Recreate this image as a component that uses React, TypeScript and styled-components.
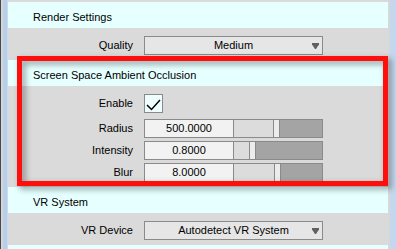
import styled, { createGlobalStyle } from 'styled-components';

const GlobalStyle = createGlobalStyle`
  html, body {
    margin: 0;
    padding: 0;
    background: #dadada;
  }
  body {
    font-family: "Liberation Sans", Arial, sans-serif;
    font-size: 11px;
    color: #000;
  }
`;

const Window = styled.div`
  position: relative;
  width: 396px;
  height: 249px;
  overflow: hidden;
  display: flex;
  background: #dadada;
`;

const LeftEdge = styled.div`
  flex: none;
  width: 8px;
  background: linear-gradient(
    to right,
    #4a4a4a 0 1px,
    #d6d6d6 1px 3px,
    #b7cfe9 3px 7px,
    #c9dbef 7px 8px
  );
`;

const RightEdge = styled.div`
  flex: none;
  width: 8px;
  background: linear-gradient(to right, #d8d8d8 0 2px, #c3d7ee 2px 8px);
`;

const Panel = styled.div`
  flex: 1;
  display: flex;
  flex-direction: column;
  padding-top: 2px;
`;

const SectionHeader = styled.div`
  flex: none;
  box-sizing: border-box;
  height: 26px;
  padding: 9px 0 0 25px;
  line-height: 13px;
  background: #e6ffff;
`;

const SectionBody = styled.div`
  flex: none;
  display: flex;
  flex-direction: column;
  gap: 3px;
  padding: 8px 0 5px;
`;

const Row = styled.div<{ $spaceAfter?: number }>`
  display: grid;
  grid-template-columns: 136px 179px;
  align-items: center;
  line-height: 13px;
  margin-bottom: ${(p) => p.$spaceAfter ?? 0}px;
`;

const Label = styled.span`
  justify-self: end;
  padding-right: 11px;
`;

const Dropdown = styled.div`
  box-sizing: border-box;
  height: 19px;
  display: grid;
  grid-template-columns: 1fr auto 1fr;
  align-items: center;
  border: 1px solid #8a8a8a;
  background: #e6e6e6;
`;

const DropdownText = styled.span`
  grid-column: 2;
  white-space: nowrap;
`;

const Arrow = styled.svg`
  grid-column: 3;
  justify-self: end;
  margin-right: 3px;
  display: block;
`;

const CheckBox = styled.div`
  box-sizing: border-box;
  width: 19px;
  height: 19px;
  border: 1px solid #8a8a8a;
  background: #eefefe;
`;

const SliderField = styled.div`
  box-sizing: border-box;
  height: 19px;
  display: flex;
  border: 1px solid #8a8a8a;
`;

const ValueBox = styled.div`
  flex: none;
  width: 88px;
  border-right: 1px solid #8a8a8a;
  background: #f2f2f2;
  text-align: center;
  line-height: 17px;
`;

const Track = styled.div`
  flex: 1;
  display: flex;
  background: #a4a4a4;
`;

const TrackFill = styled.div`
  flex: none;
  background: #dcdcdc;
`;

const Thumb = styled.div`
  flex: none;
  width: 5px;
  border-left: 1px solid #8a8a8a;
  border-right: 1px solid #8a8a8a;
  background: #ececec;
`;

const Highlight = styled.div`
  position: absolute;
  left: 17px;
  top: 56px;
  width: 371px;
  height: 130px;
  box-sizing: border-box;
  border: 5px solid #ff0e0e;
  filter: drop-shadow(3px 3px 3px rgba(0, 0, 0, 0.4));
  pointer-events: none;
  z-index: 1;
`;

const DownArrow = () => (
  <Arrow width="7" height="6" viewBox="0 0 7 6">
    <polygon points="0,0 7,0 7,1.5 4,6 3,6 0,1.5" fill="#606060" />
  </Arrow>
);

const Select = ({ value }: { value: string }) => (
  <Dropdown>
    <DropdownText>{value}</DropdownText>
    <DownArrow />
  </Dropdown>
);

const sliders = [
  { label: 'Radius', value: '500.0000', fill: 39 },
  { label: 'Intensity', value: '0.8000', fill: 15 },
  { label: 'Blur', value: '8.0000', fill: 40 },
];

const App = () => {
  return (
    <>
      <GlobalStyle />
      <Window>
        <LeftEdge />
        <Panel>
          <SectionHeader>Render Settings</SectionHeader>
          <SectionBody>
            <Row>
              <Label>Quality</Label>
              <Select value="Medium" />
            </Row>
          </SectionBody>

          <SectionHeader>Screen Space Ambient Occlusion</SectionHeader>
          <SectionBody>
            <Row $spaceAfter={3}>
              <Label>Enable</Label>
              <CheckBox>
                <svg width="17" height="17" viewBox="0 0 17 17">
                  <polyline
                    points="2,10 6.5,14.5 15,5"
                    fill="none"
                    stroke="#000"
                    strokeWidth="1.5"
                  />
                </svg>
              </CheckBox>
            </Row>
            {sliders.map((s) => (
              <Row key={s.label}>
                <Label>{s.label}</Label>
                <SliderField>
                  <ValueBox>{s.value}</ValueBox>
                  <Track>
                    <TrackFill style={{ width: s.fill }} />
                    <Thumb />
                  </Track>
                </SliderField>
              </Row>
            ))}
          </SectionBody>

          <SectionHeader>VR System</SectionHeader>
          <SectionBody>
            <Row>
              <Label>VR Device</Label>
              <Select value="Autodetect VR System" />
            </Row>
          </SectionBody>

          <SectionHeader />
        </Panel>
        <RightEdge />
        <Highlight />
      </Window>
    </>
  );
};

export default App;
